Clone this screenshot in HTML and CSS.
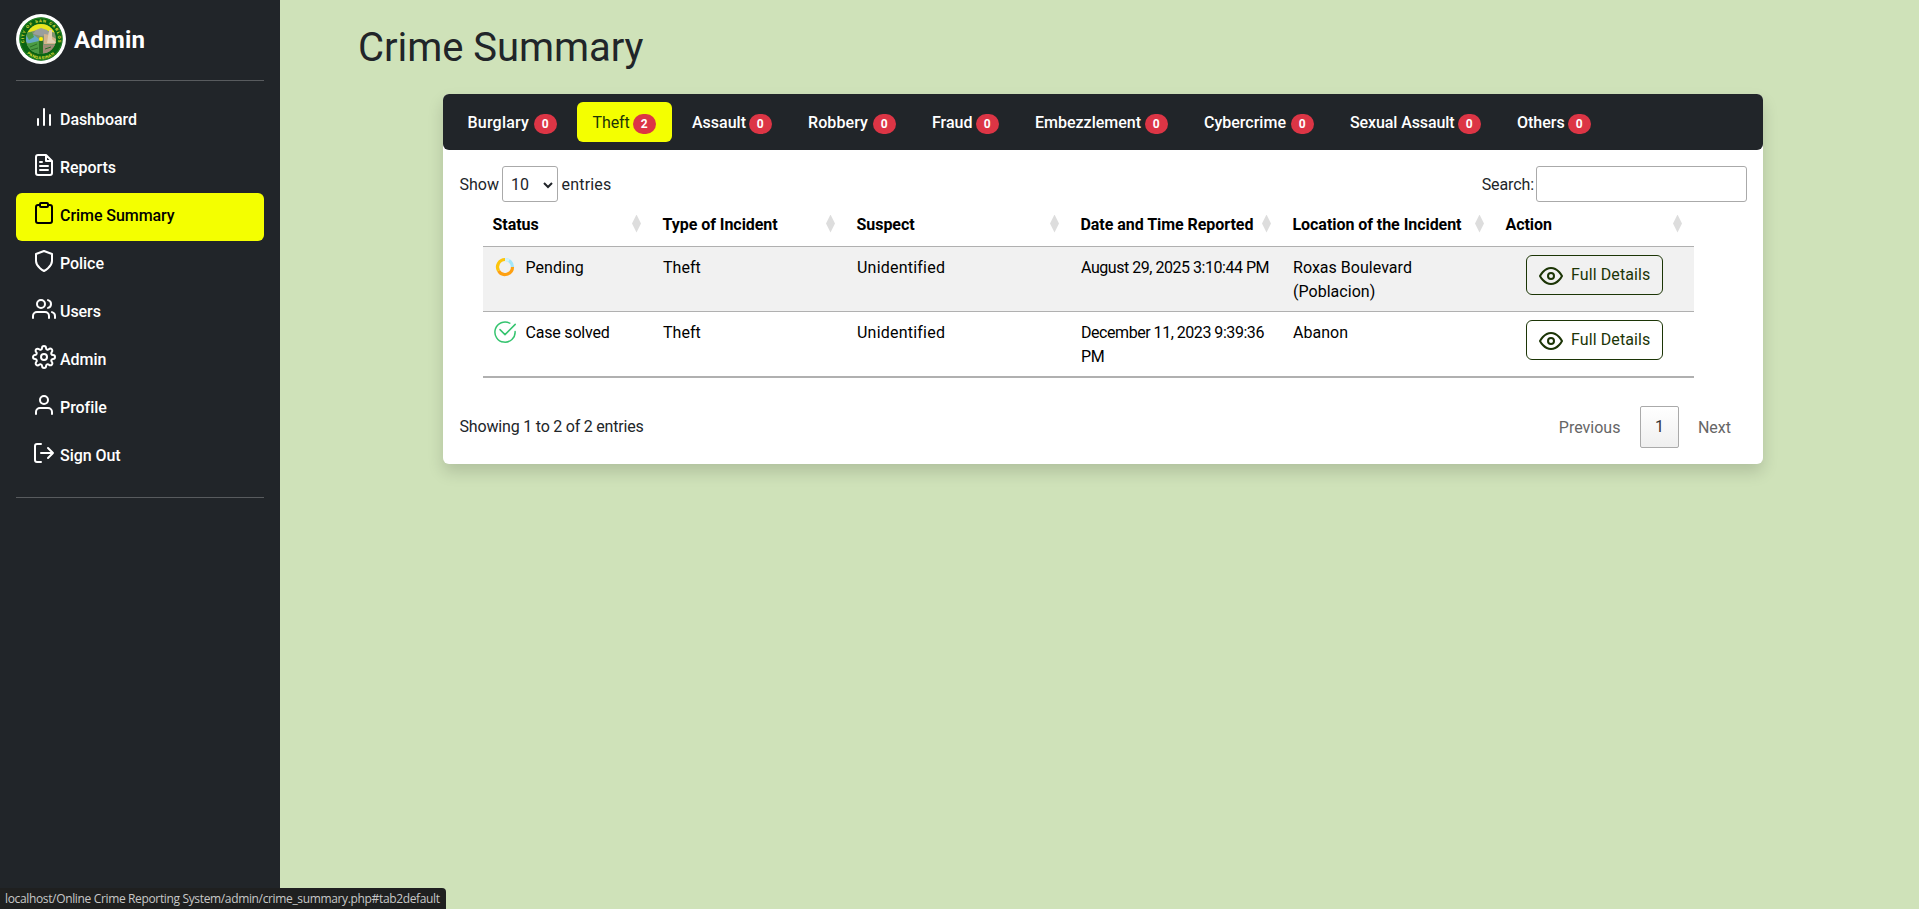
FILE: index.html
```html
<!DOCTYPE html>
<html lang="en">
<head>
<meta charset="utf-8">
<title>Crime Summary</title>
<link rel="stylesheet" href="styles.css">
</head>
<body>
<div class="layout">
  <aside class="sidebar">
    <div class="brand">
      <svg class="seal" viewBox="0 0 50 50">
        <circle cx="25" cy="25" r="25" fill="#fff"/>
        <circle cx="25" cy="25" r="21.7" fill="#0a6412"/>
        <circle cx="25" cy="25" r="21" fill="none" stroke="#2f8a2a" stroke-width=".8"/>
        <clipPath id="disc"><circle cx="25" cy="25" r="15"/></clipPath>
        <g clip-path="url(#disc)">
          <rect width="50" height="50" fill="#7f9470"/>
          <path d="M10 10h30v9L25 15l-15 4z" fill="#e9e51e"/>
          <path d="M17 20l3-4 5-2 6 2 3 5-9 1z" fill="#9b9f9c"/>
          <path d="M10 20l8 1 5 4-1 4-6 2-6-3z" fill="#63a9c4"/>
          <path d="M9 19l7-1 2 5-5 3z" fill="#4f9a45"/>
          <path d="M10 30l13-3v13H14z" fill="#4b9b43"/>
          <path d="M28 20l6 1 6 4v5H28z" fill="#d3b48a"/>
          <path d="M33 16h3v9l5 4H31z" fill="#e1cfb4"/>
          <path d="M27 31h13l-5 8h-8z" fill="#a08a76"/>
          <path d="M23 27h4v13h-4z" fill="#286f24"/>
          <path d="M14 33l7-3M15 36l7-2M29 35l6-2" stroke="#2a6f27" stroke-width="1"/>
        </g>
        <circle cx="25" cy="25" r="2" fill="#fff000"/>
        <path id="arcTop" d="M8.3 29A17.1 17.1 0 1 1 41.7 29" fill="none"/>
        <path id="arcBottom" d="M11 39.5A20 20 0 0 0 39 39.5" fill="none"/>
        <text class="seal-text"><textPath href="#arcTop" textLength="60">CITY OF SAN CARLOS</textPath></text>
        <text class="seal-text"><textPath href="#arcBottom" textLength="30">PANGASINAN</textPath></text>
      </svg>
      <span class="brand-name">Admin</span>
    </div>
    <nav class="menu">
      <a class="menu-item"><svg class="icon" viewBox="0 0 24 24"><path d="M18 20V10M12 20V4M6 20v-6"/></svg><span>Dashboard</span></a>
      <a class="menu-item"><svg class="icon" viewBox="0 0 24 24"><path d="M14 2H6a2 2 0 0 0-2 2v16a2 2 0 0 0 2 2h12a2 2 0 0 0 2-2V8zM14 2v6h6M16 13H8M16 17H8M10 9H8"/></svg><span>Reports</span></a>
      <a class="menu-item menu-item-active"><svg class="icon" viewBox="0 0 24 24"><path d="M16 4h2a2 2 0 0 1 2 2v14a2 2 0 0 1-2 2H6a2 2 0 0 1-2-2V6a2 2 0 0 1 2-2h2"/><rect x="8" y="2" width="8" height="4" rx="1"/></svg><span>Crime Summary</span></a>
      <a class="menu-item"><svg class="icon" viewBox="0 0 24 24"><path d="M12 22s8-4 8-10V5l-8-3-8 3v7c0 6 8 10 8 10z"/></svg><span>Police</span></a>
      <a class="menu-item"><svg class="icon" viewBox="0 0 24 24"><path d="M17 21v-2a4 4 0 0 0-4-4H5a4 4 0 0 0-4 4v2M23 21v-2a4 4 0 0 0-3-3.87M16 3.13a4 4 0 0 1 0 7.75"/><circle cx="9" cy="7" r="4"/></svg><span>Users</span></a>
      <a class="menu-item"><svg class="icon" viewBox="0 0 24 24"><circle cx="12" cy="12" r="3"/><path d="M19.4 15a1.65 1.65 0 0 0 .33 1.82l.06.06a2 2 0 0 1 0 2.83 2 2 0 0 1-2.83 0l-.06-.06a1.65 1.65 0 0 0-1.82-.33 1.65 1.65 0 0 0-1 1.51V21a2 2 0 0 1-2 2 2 2 0 0 1-2-2v-.09A1.65 1.65 0 0 0 9 19.4a1.65 1.65 0 0 0-1.82.33l-.06.06a2 2 0 0 1-2.83 0 2 2 0 0 1 0-2.83l.06-.06a1.65 1.65 0 0 0 .33-1.82 1.65 1.65 0 0 0-1.51-1H3a2 2 0 0 1-2-2 2 2 0 0 1 2-2h.09A1.65 1.65 0 0 0 4.6 9a1.65 1.65 0 0 0-.33-1.82l-.06-.06a2 2 0 0 1 0-2.83 2 2 0 0 1 2.83 0l.06.06a1.65 1.65 0 0 0 1.82.33H9a1.65 1.65 0 0 0 1-1.51V3a2 2 0 0 1 2-2 2 2 0 0 1 2 2v.09a1.65 1.65 0 0 0 1 1.51 1.65 1.65 0 0 0 1.82-.33l.06-.06a2 2 0 0 1 2.83 0 2 2 0 0 1 0 2.83l-.06.06a1.65 1.65 0 0 0-.33 1.82V9a1.65 1.65 0 0 0 1.51 1H21a2 2 0 0 1 2 2 2 2 0 0 1-2 2h-.09a1.65 1.65 0 0 0-1.51 1z"/></svg><span>Admin</span></a>
      <a class="menu-item"><svg class="icon" viewBox="0 0 24 24"><path d="M20 21v-2a4 4 0 0 0-4-4H8a4 4 0 0 0-4 4v2"/><circle cx="12" cy="7" r="4"/></svg><span>Profile</span></a>
      <a class="menu-item"><svg class="icon" viewBox="0 0 24 24"><path d="M9 21H5a2 2 0 0 1-2-2V5a2 2 0 0 1 2-2h4M16 17l5-5-5-5M21 12H9"/></svg><span>Sign Out</span></a>
    </nav>
  </aside>

  <main class="main">
    <h1 class="title">Crime Summary</h1>
    <section class="card">
      <nav class="tabs">
        <a class="tab">Burglary<span class="badge">0</span></a>
        <a class="tab tab-active">Theft<span class="badge">2</span></a>
        <a class="tab">Assault<span class="badge">0</span></a>
        <a class="tab">Robbery<span class="badge">0</span></a>
        <a class="tab">Fraud<span class="badge">0</span></a>
        <a class="tab">Embezzlement<span class="badge">0</span></a>
        <a class="tab">Cybercrime<span class="badge">0</span></a>
        <a class="tab">Sexual Assault<span class="badge">0</span></a>
        <a class="tab">Others<span class="badge">0</span></a>
      </nav>
      <div class="controls">
        <div class="length"><span class="length-label">Show</span>
          <span class="select">10<svg class="chevron" viewBox="0 0 10 8"><path d="M1 2l4 4 4-4"/></svg></span>
          <span class="length-suffix">entries</span></div>
        <label class="search"><span class="search-label">Search:</span><input class="search-input" type="text"></label>
      </div>
      <table class="table">
        <colgroup><col class="col-status"><col class="col-type"><col class="col-suspect"><col class="col-date"><col class="col-place"><col class="col-action"></colgroup>
        <thead>
          <tr>
            <th><div class="head">Status<i class="sort"></i></div></th>
            <th><div class="head">Type of Incident<i class="sort"></i></div></th>
            <th><div class="head">Suspect<i class="sort"></i></div></th>
            <th><div class="head">Date and Time Reported<i class="sort"></i></div></th>
            <th><div class="head">Location of the Incident<i class="sort"></i></div></th>
            <th><div class="head">Action<i class="sort"></i></div></th>
          </tr>
        </thead>
        <tbody>
          <tr class="row-odd">
            <td><div class="status"><svg class="status-icon" viewBox="0 0 24 24" fill="none" stroke-width="3.2"><path d="M12 4.5A7.5 7.5 0 0 1 19.5 12" stroke="#a2e6fa"/><path d="M12 4.5a7.5 7.5 0 0 1 4 1.1" stroke="#d3f2fb"/><path d="M19.5 12A7.5 7.5 0 0 1 5.5 15.7" stroke="#fea012"/><path d="M5.5 15.7A7.5 7.5 0 0 1 12 4.5" stroke="#fcc50d"/></svg>Pending</div></td>
            <td>Theft</td>
            <td class="suspect">Unidentified</td>
            <td class="date">August 29, 2025 3:10:44 PM</td>
            <td>Roxas Boulevard<br>(Poblacion)</td>
            <td class="action"><a class="details"><svg class="icon icon-eye" viewBox="0 0 24 24"><path d="M1 12s4-8 11-8 11 8 11 8-4 8-11 8-11-8-11-8z"/><circle cx="12" cy="12" r="3"/></svg>Full Details</a></td>
          </tr>
          <tr>
            <td><div class="status status-solved"><svg class="status-icon" viewBox="0 0 24 24" fill="none" stroke="#35c46f" stroke-width="1.5" stroke-linecap="round" stroke-linejoin="round"><path d="M16.8 3.2A10.1 10.1 0 1 0 22.1 11.5M22.2 4.4L12 14.6 7 9.6"/></svg>Case solved</div></td>
            <td>Theft</td>
            <td class="suspect">Unidentified</td>
            <td class="date">December 11, 2023 9:39:36<br>PM</td>
            <td>Abanon</td>
            <td class="action"><a class="details"><svg class="icon icon-eye" viewBox="0 0 24 24"><path d="M1 12s4-8 11-8 11 8 11 8-4 8-11 8-11-8-11-8z"/><circle cx="12" cy="12" r="3"/></svg>Full Details</a></td>
          </tr>
        </tbody>
      </table>
      <footer class="footer">
        <span class="info">Showing 1 to 2 of 2 entries</span>
        <div class="pager"><a class="page-link">Previous</a><a class="page-current">1</a><a class="page-link page-next">Next</a></div>
      </footer>
    </section>
  </main>
</div>
<div class="link-status">localhost/Online Crime Reporting System/admin/crime_summary.php#tab2default</div>
</body>
</html>
```

FILE: styles.css
```css
* { box-sizing: border-box; }

body {
  margin: 0;
  background: #cfe2b9;
  color: #212529;
  font: 400 16px/24px Roboto, "Liberation Sans", sans-serif;
  overflow: hidden;
}

.layout { display: flex; height: 100vh; }

.sidebar { width: 280px; padding: 14px 16px; background: #212529; color: #fff; flex: none; }
.brand { display: flex; align-items: center; gap: 8px; height: 67px; padding-bottom: 17px; border-bottom: 1px solid #585b5e; }
.seal { width: 50px; height: 50px; flex: none; }
.seal-text { font: 700 4px "Liberation Sans", sans-serif; fill: #f3e93a; }
.brand-name { font-size: 24px; font-weight: 700; line-height: 30px; padding-top: 2px; letter-spacing: .15px; }

.menu { display: flex; flex-direction: column; padding: 16px 0; height: 417px; border-bottom: 1px solid #585b5e; }
.menu-item { display: flex; gap: 4px; height: 48px; padding: 8px 16px; border-radius: 6px; font-weight: 500; letter-spacing: -.06px; flex: none; }
.menu-item span { padding-top: 3px; }
.menu-item-active { background: #f4ff00; color: #000; }

.icon { width: 24px; height: 24px; fill: none; stroke: currentColor; stroke-width: 2; stroke-linecap: round; stroke-linejoin: round; flex: none; }

.main { flex: 1; padding: 24px 156px 0 78px; }
.title { margin: 0 0 22px; font-size: 40px; line-height: 48px; font-weight: 400; letter-spacing: -.05px; }

.card { width: 1320px; height: 370px; margin-left: 85px; background: #fff; border-radius: 6px; box-shadow: 0 8px 16px rgba(0, 0, 0, .15); }

.tabs { display: flex; gap: 4px; height: 56px; padding: 8px 9px; background: #212529; border-radius: 6px; }
.tab { display: flex; align-items: center; justify-content: space-between; width: 121px; padding: 1px 16px 0 16px; border-radius: 6px; color: #fff; font-weight: 500; white-space: nowrap; }
.tab:nth-child(1) { padding-left: 15.5px; letter-spacing: .2px; }
.tab:nth-child(2) { width: 95px; padding-left: 15.5px; }
.tab:nth-child(3) { width: 112px; }
.tab:nth-child(4) { width: 120px; letter-spacing: .1px; }
.tab:nth-child(5) { width: 99px; }
.tab:nth-child(6) { width: 165px; }
.tab:nth-child(7) { width: 142px; }
.tab:nth-child(8) { width: 163px; letter-spacing: -.1px; }
.tab:nth-child(9) { width: 106px; }
.tab-active { background: #f4ff00; color: #1c3506; font-weight: 400; letter-spacing: -.1px; }
.badge { width: 23.5px; height: 20px; border-radius: 10px; background: #dc3545; color: #fff; font-size: 12px; font-weight: 700; line-height: 20px; letter-spacing: 0; text-align: center; margin-top: 2px; }

.controls { display: flex; justify-content: space-between; padding: 16px 16px 0 16.5px; height: 52px; }
.length { display: flex; align-items: center; }
.length-label { width: 42.5px; padding-top: 1px; }
.select { display: flex; align-items: center; justify-content: space-between; width: 56px; height: 36px; margin-right: 3.5px; padding: 1px 4px 0 8px; border: 1px solid #aaa; border-radius: 3px; }
.length-suffix { padding-top: 1px; letter-spacing: .2px; }
.chevron { width: 10px; height: 8px; fill: none; stroke: #212529; stroke-width: 2; }
.search { display: flex; align-items: center; gap: 2px; }
.search-label { padding-top: 1px; letter-spacing: -.1px; }
.search-input { width: 211px; height: 36px; padding: 5px; border: 1px solid #aaa; border-radius: 3px; background: transparent; }

.table { width: 1211px; margin-left: 40px; table-layout: fixed; border-collapse: separate; border-spacing: 0; color: #000; }
.col-status { width: 170px; }
.col-type { width: 194px; }
.col-suspect { width: 224px; }
.col-date { width: 212px; }
.col-place { width: 213px; }
.col-action { width: 198px; }
.table th { height: 45px; padding: 2px 12px 0 9.5px; border-bottom: 1px solid #b0b0b0; text-align: left; font-weight: 700; white-space: nowrap; }
.head { display: flex; align-items: center; justify-content: space-between; letter-spacing: -.05px; }
.sort { width: 9px; height: 18px; margin-top: -3px; background: #ddd; clip-path: polygon(50% 0, 100% 50%, 50% 100%, 0 50%); }
.table td { height: 65px; padding: 9px 10px 0; border-bottom: 1px solid #b0b0b0; vertical-align: top; letter-spacing: .03px; }
.table tr:last-child td { height: 66px; border-bottom-width: 2px; }
.table .suspect { letter-spacing: .22px; }
.table .action { padding-top: 8px; }
.table .date { padding-right: 0; white-space: nowrap; letter-spacing: -.45px; word-spacing: -.1px; }
.row-odd { background: #f1f1f1; }
.status { display: flex; gap: 8.5px; }
.status-solved { letter-spacing: -.2px; }
.status-icon { width: 24px; height: 24px; margin-top: -1px; }
.details { display: flex; align-items: center; gap: 8px; width: 137px; height: 40px; margin-left: 20px; padding: 0 12px; border: 1px solid #1c3506; border-radius: 6px; color: #1c3506; white-space: nowrap; letter-spacing: .1px; }
.icon-eye { margin-top: 2px; }

.footer { display: flex; justify-content: space-between; padding: 28px 16px 0 16.5px; }
.info { padding-top: 9px; letter-spacing: -.15px; word-spacing: -.2px; }
.pager { display: flex; align-items: center; }
.page-link { color: #666; padding: 1px 19.5px 0 0; }
.page-current { display: flex; align-items: center; justify-content: center; width: 39px; height: 42px; border: 1px solid #aaa; border-radius: 2px; background: linear-gradient(#fff, #efefef); color: #333; }
.page-next { padding: 1px 16px 0 19px; }

.link-status { position: fixed; left: 0; bottom: 0; width: 446px; height: 21px; padding-left: 5px; background: #1f2020; border-top-right-radius: 4px; color: #c8c8c8; font: 12px/21px "Open Sans", "Noto Sans", sans-serif; letter-spacing: -.35px; white-space: nowrap; }
```
